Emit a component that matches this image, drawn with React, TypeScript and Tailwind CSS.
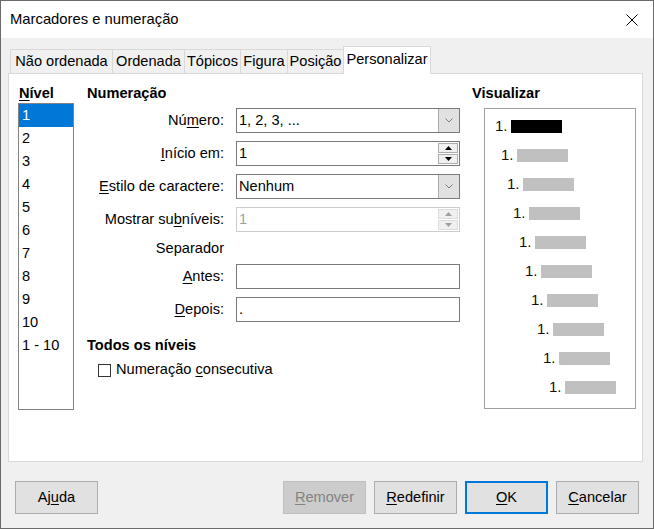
import React from "react";

function U({ c }: { c: string }) {
  return <span className="underline underline-offset-[2px]">{c}</span>;
}

function Field({ children, kind, disabled }: { children?: React.ReactNode; kind?: "drop" | "spin"; disabled?: boolean }) {
  return (
    <div className={`ml-[12px] flex h-[25px] w-[224px] items-stretch border bg-white ${disabled ? "border-[#cccccc] text-[#a0a0a0]" : "border-[#7a7a7a] text-black"}`}>
      <div className="flex flex-1 items-center pl-[2px] leading-none">{children}</div>
      {kind === "drop" && (
        <div className="flex w-[21px] items-center justify-center border-l border-[#adadad] bg-[#e1e1e1]">
          <svg width="8" height="5" viewBox="0 0 8 5">
            <path d="M0.5 0.5 L4 4 L7.5 0.5" fill="none" stroke="#7a7a7a" strokeWidth="1" />
          </svg>
        </div>
      )}
      {kind === "spin" && (
        <div className="flex w-[21px] flex-col justify-center gap-[1px] pr-[1px]">
          {[0, 1].map((i) => (
            <div
              key={i}
              className={`flex h-[10px] items-center justify-center border ${disabled ? "border-[#dcdcdc] bg-[#f0f0f0]" : "border-[#adadad] bg-[#f0f0f0]"}`}
            >
              <svg width="7" height="4" viewBox="0 0 7 4">
                {i === 0 ? (
                  <path d="M0 4 L3.5 0 L7 4 Z" fill={disabled ? "#a0a0a0" : "#000"} />
                ) : (
                  <path d="M0 0 L3.5 4 L7 0 Z" fill={disabled ? "#a0a0a0" : "#000"} />
                )}
              </svg>
            </div>
          ))}
        </div>
      )}
    </div>
  );
}

function Row({ label, children, className = "" }: { label: React.ReactNode; children?: React.ReactNode; className?: string }) {
  return (
    <div className={`flex items-center ${className}`}>
      <div className="w-[137px] whitespace-nowrap text-right leading-none">{label}</div>
      {children}
    </div>
  );
}

export default function App() {
  const tabs: [string, number][] = [
    ["Não ordenada", 102],
    ["Ordenada", 72],
    ["Tópicos", 56],
    ["Figura", 47],
    ["Posição", 56],
  ];
  const levels = ["1", "2", "3", "4", "5", "6", "7", "8", "9", "10", "1 - 10"];
  const btn = "flex h-[33px] w-[83px] items-center justify-center border";

  return (
    <div className="flex h-[529px] w-[654px] flex-col border border-[#6b6b6b] bg-[#f0f0f0] font-['Liberation_Sans',Arial,sans-serif] text-[14.6px] text-black">
      {/* title bar */}
      <div className="flex h-[37px] shrink-0 items-center justify-between bg-white pl-[9px] pr-[15px]">
        <span className="text-[14.8px]">Marcadores e numeração</span>
        <svg width="12" height="12" viewBox="0 0 12 12">
          <path d="M0.5 0.5 L11.5 11.5 M11.5 0.5 L0.5 11.5" stroke="#000" strokeWidth="1" />
        </svg>
      </div>

      {/* tabs */}
      <div className="relative z-10 mb-[-1px] ml-[9px] mt-[8px] flex h-[28px] items-end">
        {tabs.map(([t, w]) => (
          <div
            key={t}
            style={{ width: w }}
            className="mb-[1px] flex h-[24px] items-center justify-center whitespace-nowrap border-l border-t border-[#d9d9d9] bg-[#f0f0f0] pt-[1px]"
          >
            {t}
          </div>
        ))}
        <div className="flex h-[28px] w-[88px] items-center justify-center whitespace-nowrap border-l border-r border-t border-[#d9d9d9] bg-white pb-[2px]">
          Personalizar
        </div>
      </div>

      {/* panel */}
      <div className="ml-[7px] mr-[10px] flex h-[389px] shrink-0 border border-[#d9d9d9] bg-white pt-[10px]">
        {/* Nível */}
        <div className="ml-[9px] flex w-[56px] flex-col">
          <div className="h-[18px] pl-[1px] font-bold leading-[18px]">
            <U c="N" />
            ível
          </div>
          <div className="mt-[1px] h-[307px] border border-[#828282] bg-white">
            {levels.map((l, i) => (
              <div
                key={l}
                className={`flex h-[23px] items-center pl-[3px] ${i === 0 ? "bg-[#0078d7] text-white" : ""}`}
              >
                {l}
              </div>
            ))}
          </div>
        </div>

        {/* Numeração */}
        <div className="ml-[13px] flex w-[373px] flex-col">
          <div className="h-[18px] font-bold leading-[18px]">Numeração</div>
          <Row label={<>Nú<U c="m" />ero:</>} className="mt-[6px]">
            <Field kind="drop">1, 2, 3, ...</Field>
          </Row>
          <Row label={<><U c="I" />nício em:</>} className="mt-[8px]">
            <Field kind="spin">1</Field>
          </Row>
          <Row label={<><U c="E" />stilo de caractere:</>} className="mt-[8px]">
            <Field kind="drop">Nenhum</Field>
          </Row>
          <Row label={<>Mostrar su<U c="b" />níveis:</>} className="mt-[8px]">
            <Field kind="spin" disabled>1</Field>
          </Row>
          <Row label="Separador" className="h-[32px]" />
          <Row label={<><U c="A" />ntes:</>}>
            <Field />
          </Row>
          <Row label={<><U c="D" />epois:</>} className="mt-[8px]">
            <Field>.</Field>
          </Row>
          <div className="mt-[14px] h-[18px] font-bold leading-[18px]">Todos os níveis</div>
          <div className="ml-[11px] mt-[6px] flex h-[20px] items-center">
            <div className="h-[13px] w-[13px] border border-[#333333] bg-white" />
            <span className="ml-[5px]">
              Numeração <U c="c" />onsecutiva
            </span>
          </div>
        </div>

        {/* Visualizar */}
        <div className="ml-[12px] flex w-[164px] flex-col">
          <div className="h-[18px] font-bold leading-[18px]">Visualizar</div>
          <div className="ml-[12px] mt-[6px] h-[301px] w-[152px] border border-[#a0a0a0] bg-white pl-[10px] pt-[3px]">
            {Array.from({ length: 10 }).map((_, i) => (
              <div key={i} className="flex h-[29px] items-center" style={{ marginLeft: i * 6 }}>
                <span className="w-[16px] text-[15px] text-[#111]">1.</span>
                <div className={`h-[13px] w-[51px] ${i === 0 ? "bg-black" : "bg-[#c0c0c0]"}`} />
              </div>
            ))}
          </div>
        </div>
      </div>

      {/* buttons */}
      <div className="mt-[19px] flex px-[14px]">
        <div className={`${btn} border-[#adadad] bg-[#e1e1e1]`}>
          Aj<U c="u" />da
        </div>
        <div className="flex-1" />
        <div className="flex gap-[8px]">
          <div className={`${btn} border-[#bfbfbf] bg-[#cccccc] text-[#838383]`}>
            <U c="R" />emover
          </div>
          <div className={`${btn} border-[#adadad] bg-[#e1e1e1]`}>
            <U c="R" />edefinir
          </div>
          <div className={`${btn} border-2 border-[#0078d7] bg-[#e1e1e1]`}>
            <U c="O" />K
          </div>
          <div className={`${btn} border-[#adadad] bg-[#e1e1e1]`}>
            <U c="C" />ancelar
          </div>
        </div>
      </div>
    </div>
  );
}
